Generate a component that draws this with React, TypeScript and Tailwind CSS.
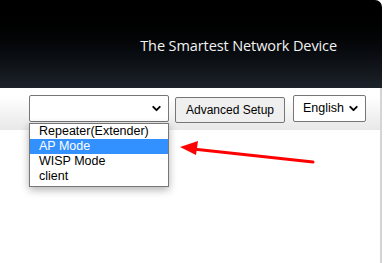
import { ChevronDown } from 'lucide-react'

const modes = ['Repeater(Extender)', 'AP Mode', 'WISP Mode', 'client']

export default function App() {
  return (
    <div className="relative h-[263px] w-[386px] overflow-hidden bg-white font-['Liberation_Sans',Arial,sans-serif]">
      <div className="flex h-[88px] w-[382px] items-start justify-end rounded-tr-[7px] bg-gradient-to-b from-black to-[#1d232a] pr-[45px] pt-[35px]">
        <span className="font-['Open_Sans',sans-serif] text-[14.5px] tracking-[-0.1px] text-[#f2f2f2]">
          The Smartest Network Device
        </span>
      </div>
      <div className="h-[175px] w-[382px] border-r-2 border-[#d4d4d4]">
        <div className="relative flex h-[42px] items-start bg-gradient-to-b from-white from-20% to-[#e8e8e8] pl-[29px] pt-[7px]">
          <div className="relative">
            <div className="flex h-[27px] w-[140px] items-center justify-end rounded-[2px] border border-[#767676] bg-white pr-[5px]">
              <ChevronDown size={13} strokeWidth={3.5} className="text-black" />
            </div>
            <div className="absolute left-0 top-[28px] z-10 w-[140px] border border-[#767676] bg-white pb-[2px] text-[12.5px] leading-[15px] text-black shadow-[0_3px_8px_rgba(0,0,0,0.3)]">
              {modes.map((m) => (
                <div key={m} className={`px-[9px] ${m === 'AP Mode' ? 'bg-[#3390ff] text-white' : ''}`}>
                  {m}
                </div>
              ))}
            </div>
          </div>
          <button className="ml-[6px] mt-[2px] h-[26px] w-[110px] rounded-[2px] border border-[#767676] bg-[#efefef] text-[12px] text-black">
            Advanced Setup
          </button>
          <div className="ml-[8px] flex h-[27px] w-[73px] items-center justify-between rounded-[2px] border border-[#767676] bg-white pl-[9px] pr-[5px] text-[12.5px] text-black">
            <span>English</span>
            <ChevronDown size={13} strokeWidth={3.5} />
          </div>
        </div>
      </div>
      <svg className="absolute left-0 top-0" width="386" height="263" viewBox="0 0 386 263">
        <line x1="313" y1="162" x2="193" y2="149" stroke="#ff0000" strokeWidth="3" strokeLinecap="round" />
        <polygon points="180,147 198,141 196,155" fill="#ff0000" />
      </svg>
    </div>
  )
}
